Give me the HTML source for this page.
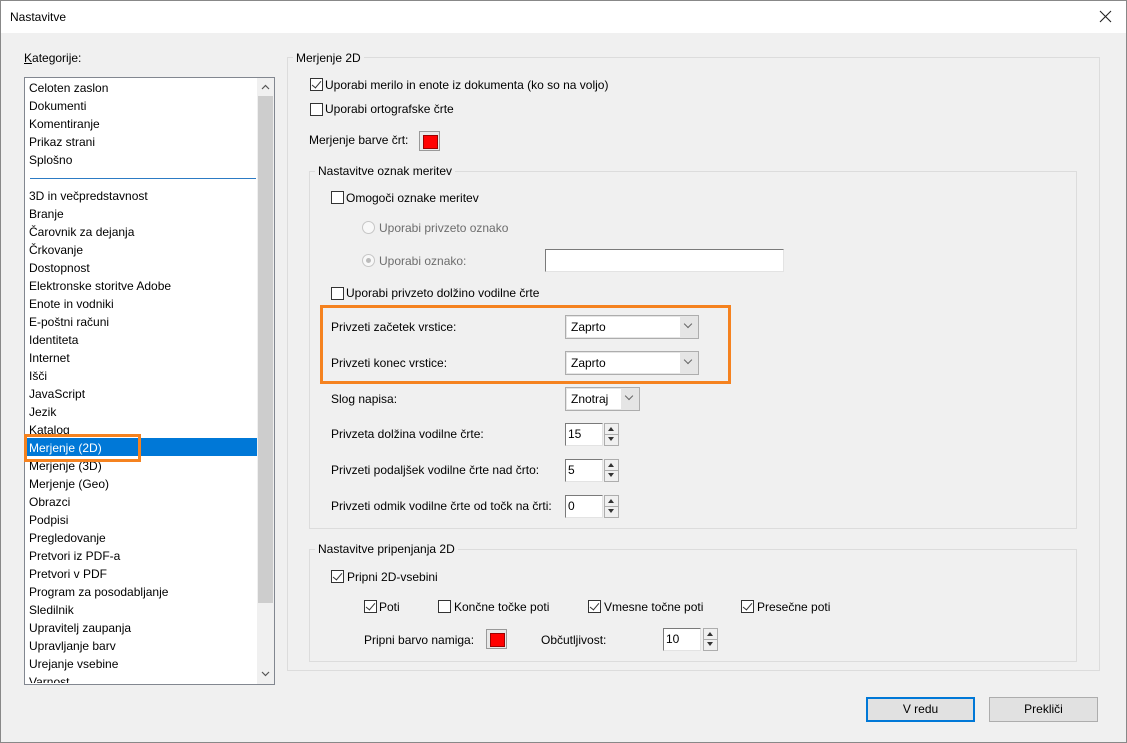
<!DOCTYPE html>
<html><head><meta charset="utf-8"><style>
*{margin:0;padding:0;box-sizing:border-box}
body{width:1127px;height:743px;overflow:hidden;background:#f0f0f0;font-family:"Liberation Sans",sans-serif;font-size:12px;color:#000;position:relative}
.a{position:absolute}
.t{position:absolute;line-height:16px;white-space:nowrap}
.g{color:#6d6d6d}
.cb{position:absolute;width:13px;height:13px;border:1px solid #333;background:#fff}
.cb.c::after{content:"";position:absolute;left:3px;top:0px;width:4px;height:8px;border:solid #333;border-width:0 1.3px 1.3px 0;transform:rotate(40deg)}
.fs{position:absolute;border:1px solid #dcdcdc}
.lg{position:absolute;background:#f0f0f0;padding:0 3px;line-height:16px;white-space:nowrap}
.combo{position:absolute;border:1px solid #adadad;background:#e5e5e5}
.combo .w{position:absolute;left:1px;top:1px;bottom:1px;background:#fff;padding-left:4px;line-height:21px}
.chev{position:absolute;top:8px;width:6px;height:6px;border:solid #666;border-width:0 1px 1px 0;transform:rotate(45deg)}
.inp{position:absolute;background:#fff;border:1px solid #7a7a7a;border-right-color:#e3e3e3;border-bottom-color:#e3e3e3;padding-left:2px;line-height:20px}
.spin{position:absolute;width:15px;height:23px;border:1px solid #adadad;background:#f0f0f0}
.spin::before{content:"";position:absolute;left:3px;top:3px;border:3px solid transparent;border-bottom:4px solid #333;border-top:0}
.spin::after{content:"";position:absolute;left:3px;top:13px;border:3px solid transparent;border-top:4px solid #333;border-bottom:0}
.spin i{position:absolute;left:0;right:0;top:10px;border-top:1px solid #adadad}
.sw{position:absolute;width:21px;height:20px;border:1px solid #999;background:#e8e8e8}
.sw::after{content:"";position:absolute;left:3px;top:3px;width:13px;height:12px;background:#f00;border:1px solid #900}
.rad{position:absolute;width:13px;height:13px;border-radius:50%;border:1px solid #c6c6c6;background:#f8f8f8}
.or{position:absolute;border:3px solid #f5821f}
</style></head><body>
<div class="a" style="left:0;top:0;width:1127px;height:743px;border:1px solid #888"></div>
<div class="a" style="left:1px;top:1px;width:1125px;height:32px;background:#fff"></div>
<div class="t" style="left:10px;top:9px">Nastavitve</div>
<svg class="a" style="left:1099px;top:10px" width="13" height="13"><path d="M1 1L12 12M12 1L1 12" stroke="#222" stroke-width="1.1"/></svg>

<div class="t" style="left:24px;top:50px"><u>K</u>ategorije:</div>
<div class="a" style="left:24px;top:77px;width:251px;height:608px;border:1px solid #828790;background:#fff;overflow:hidden">
<div class="a" style="left:232px;top:0;width:17px;height:606px;background:#f0f0f0"></div>
<div class="a" style="left:233px;top:18px;width:15px;height:507px;background:#cdcdcd"></div>
<svg class="a" style="left:236px;top:6px" width="9" height="6"><path d="M1 5L4.5 1.5L8 5" stroke="#555" fill="none" stroke-width="1.2"/></svg>
<svg class="a" style="left:236px;top:593px" width="9" height="6"><path d="M1 1L4.5 4.5L8 1" stroke="#555" fill="none" stroke-width="1.2"/></svg>
<div class="a" style="left:5px;top:100px;width:226px;border-top:1px solid #2c7bc4"></div>
<div class="a" style="left:0;top:360px;width:232px;height:18px;background:#0078d7"></div>
</div>
<div class="t" style="left:29px;top:79px;line-height:18px">Celoten zaslon<br>Dokumenti<br>Komentiranje<br>Prikaz strani<br>Splošno</div>
<div class="t" style="left:29px;top:187px;line-height:18px;height:496px;overflow:hidden">3D in večpredstavnost<br>Branje<br>Čarovnik za dejanja<br>Črkovanje<br>Dostopnost<br>Elektronske storitve Adobe<br>Enote in vodniki<br>E-poštni računi<br>Identiteta<br>Internet<br>Išči<br>JavaScript<br>Jezik<br>Katalog<br><span style="color:#fff">Merjenje (2D)</span><br>Merjenje (3D)<br>Merjenje (Geo)<br>Obrazci<br>Podpisi<br>Pregledovanje<br>Pretvori iz PDF-a<br>Pretvori v PDF<br>Program za posodabljanje<br>Sledilnik<br>Upravitelj zaupanja<br>Upravljanje barv<br>Urejanje vsebine<br>Varnost</div>
<div class="or" style="left:24px;top:434px;width:117px;height:28px"></div>

<div class="fs" style="left:287px;top:57px;width:813px;height:614px"></div>
<div class="lg" style="left:293px;top:50px">Merjenje 2D</div>
<div class="cb c" style="left:310px;top:78px"></div><div class="t" style="left:325px;top:77px">Uporabi merilo in enote iz dokumenta (ko so na voljo)</div>
<div class="cb" style="left:310px;top:103px"></div><div class="t" style="left:325px;top:101px">Uporabi ortografske črte</div>
<div class="t" style="left:309px;top:132px">Merjenje barve črt:</div>
<div class="sw" style="left:419px;top:131px"></div>

<div class="fs" style="left:309px;top:171px;width:768px;height:358px"></div>
<div class="lg" style="left:315px;top:163px">Nastavitve oznak meritev</div>
<div class="cb" style="left:331px;top:191px"></div><div class="t" style="left:346px;top:190px">Omogoči oznake meritev</div>
<div class="rad" style="left:362px;top:221px"></div><div class="t g" style="left:379px;top:220px">Uporabi privzeto oznako</div>
<div class="rad" style="left:362px;top:254px"><div class="a" style="left:3px;top:3px;width:5px;height:5px;border-radius:50%;background:#bbb"></div></div><div class="t g" style="left:379px;top:253px">Uporabi oznako:</div>
<div class="a" style="left:545px;top:249px;width:239px;height:23px;background:#fff;border:1px solid #7a7a7a;border-right-color:#e3e3e3;border-bottom-color:#e3e3e3"></div>
<div class="cb" style="left:331px;top:287px"></div><div class="t" style="left:346px;top:285px">Uporabi privzeto dolžino vodilne črte</div>

<div class="t" style="left:331px;top:319px">Privzeti začetek vrstice:</div>
<div class="combo" style="left:565px;top:315px;width:134px;height:24px"><div class="w" style="width:113px">Zaprto</div><div class="chev" style="left:119px;top:5px"></div></div>
<div class="t" style="left:331px;top:355px">Privzeti konec vrstice:</div>
<div class="combo" style="left:565px;top:351px;width:134px;height:24px"><div class="w" style="width:113px">Zaprto</div><div class="chev" style="left:119px;top:5px"></div></div>
<div class="or" style="left:320px;top:305px;width:411px;height:79px"></div>
<div class="t" style="left:331px;top:391px">Slog napisa:</div>
<div class="combo" style="left:565px;top:387px;width:75px;height:24px"><div class="w" style="width:54px">Znotraj</div><div class="chev" style="left:60px;top:5px"></div></div>
<div class="t" style="left:331px;top:426px">Privzeta dolžina vodilne črte:</div>
<div class="inp" style="left:565px;top:423px;width:38px;height:23px">15</div><div class="spin" style="left:604px;top:423px"><i></i></div>
<div class="t" style="left:331px;top:462px">Privzeti podaljšek vodilne črte nad črto:</div>
<div class="inp" style="left:565px;top:459px;width:38px;height:23px">5</div><div class="spin" style="left:604px;top:459px"><i></i></div>
<div class="t" style="left:331px;top:498px">Privzeti odmik vodilne črte od točk na črti:</div>
<div class="inp" style="left:565px;top:495px;width:38px;height:23px">0</div><div class="spin" style="left:604px;top:495px"><i></i></div>

<div class="fs" style="left:309px;top:549px;width:768px;height:113px"></div>
<div class="lg" style="left:315px;top:541px">Nastavitve pripenjanja 2D</div>
<div class="cb c" style="left:331px;top:570px"></div><div class="t" style="left:347px;top:569px">Pripni 2D-vsebini</div>
<div class="cb c" style="left:364px;top:600px"></div><div class="t" style="left:379px;top:599px">Poti</div>
<div class="cb" style="left:438px;top:600px"></div><div class="t" style="left:454px;top:599px">Končne točke poti</div>
<div class="cb c" style="left:588px;top:600px"></div><div class="t" style="left:604px;top:599px">Vmesne točne poti</div>
<div class="cb c" style="left:741px;top:600px"></div><div class="t" style="left:757px;top:599px">Presečne poti</div>
<div class="t" style="left:364px;top:632px">Pripni barvo namiga:</div>
<div class="sw" style="left:486px;top:629px"></div>
<div class="t" style="left:541px;top:632px">Občutljivost:</div>
<div class="inp" style="left:663px;top:628px;width:38px;height:23px">10</div><div class="spin" style="left:703px;top:628px"><i></i></div>

<div class="a" style="left:866px;top:697px;width:109px;height:25px;border:2px solid #0078d7;background:#e1e1e1;text-align:center;line-height:21px">V redu</div>
<div class="a" style="left:989px;top:697px;width:109px;height:25px;border:1px solid #adadad;background:#e1e1e1;text-align:center;line-height:23px">Prekliči</div>
</body></html>
